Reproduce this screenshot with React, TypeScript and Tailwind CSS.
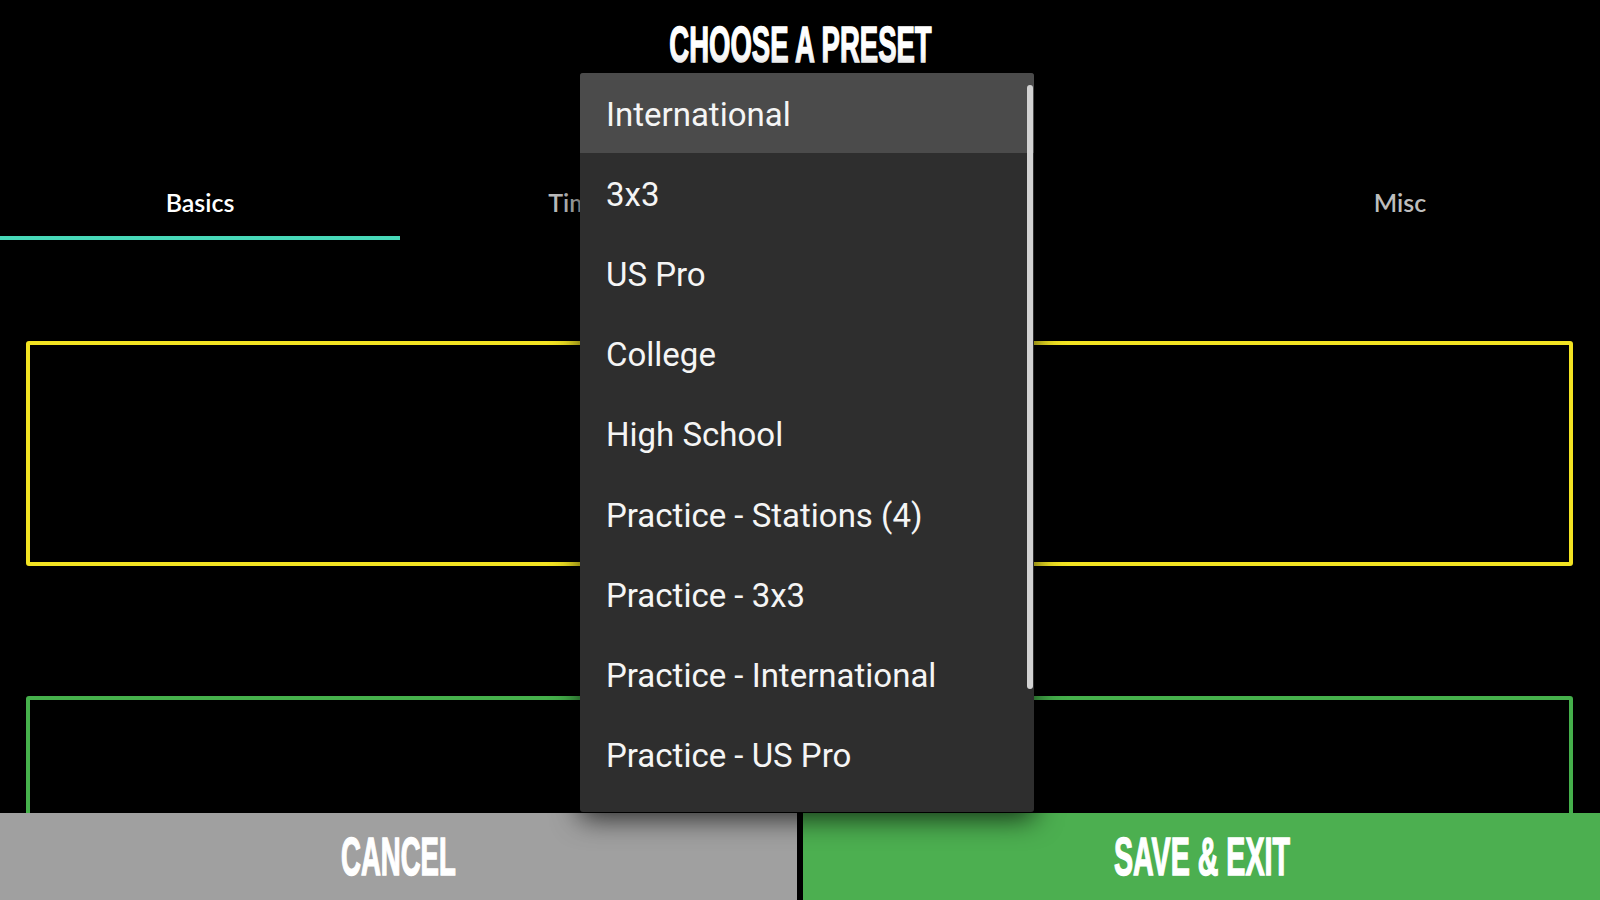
import { useState } from 'react';

const presets = [
  'International',
  '3x3',
  'US Pro',
  'College',
  'High School',
  'Practice - Stations (4)',
  'Practice - 3x3',
  'Practice - International',
  'Practice - US Pro',
  'Practice - College',
];

const tabs = ['Basics', 'Timeouts', 'Fouls', 'Misc'];

// condensed headline style (faked from Liberation Sans Bold)
const headline =
  "inline-block font-['Liberation_Sans',Arial,sans-serif] font-bold text-white leading-none [-webkit-text-stroke:1.5px_#fff]";

export default function App() {
  const [active, setActive] = useState(0);
  const [selected, setSelected] = useState(0);

  return (
    <div className="relative flex h-[900px] w-[1600px] flex-col overflow-hidden bg-black">
      {/* title */}
      <div className="flex h-[90px] shrink-0 items-center justify-center">
        <h1 className={`${headline} scale-x-[0.55] text-[50px]`}>CHOOSE A PRESET</h1>
      </div>

      {/* tabs */}
      <div className="flex h-[150px] shrink-0 items-end">
        {tabs.map((t, i) => (
          <button
            key={t}
            onClick={() => setActive(i)}
            className={`flex h-[72px] flex-1 items-center justify-center border-b-4 font-['Lato',sans-serif] text-[25px] font-semibold leading-none ${
              active === i ? 'border-[#48d9b9] text-white' : 'border-transparent text-[#bdbdbd]'
            }`}
          >
            {t}
          </button>
        ))}
      </div>

      {/* content */}
      <div className="flex min-h-0 flex-1 flex-col overflow-hidden pl-[26px] pr-[27px] pt-[101px]">
        <div className="h-[225px] shrink-0 rounded-[3px] border-4 border-[#f2e322]" />
        <div className="mt-[130px] h-[300px] shrink-0 rounded-[3px] border-4 border-[#45b04b]" />
      </div>

      {/* bottom buttons */}
      <div className="flex h-[87px] shrink-0 gap-[6px]">
        <button className="flex flex-1 items-center justify-center bg-[#a0a0a0]">
          <span className={`${headline} scale-x-[0.52] text-[53px]`}>CANCEL</span>
        </button>
        <button className="flex flex-1 items-center justify-center bg-[#4caf50]">
          <span className={`${headline} scale-x-[0.54] text-[53px]`}>SAVE &amp; EXIT</span>
        </button>
      </div>

      {/* preset dropdown */}
      <div className="absolute left-[580px] top-[73px] h-[739px] w-[454px] overflow-hidden rounded-[3px] bg-[#2e2e2e] shadow-[0_6px_28px_rgba(0,0,0,0.75)]">
        <ul className="font-['Roboto',sans-serif] text-[33px] leading-none text-[#f5f5f5]">
          {presets.map((p, i) => (
            <li
              key={p}
              onClick={() => setSelected(i)}
              className={`flex h-[80.2px] items-center pl-[26px] pt-[2px] ${selected === i ? 'bg-[#4b4b4b]' : ''}`}
            >
              {p}
            </li>
          ))}
        </ul>
        <div className="absolute right-[1px] top-[12px] h-[604px] w-[6px] rounded-full bg-[#d2d2d2]" />
      </div>
    </div>
  );
}
